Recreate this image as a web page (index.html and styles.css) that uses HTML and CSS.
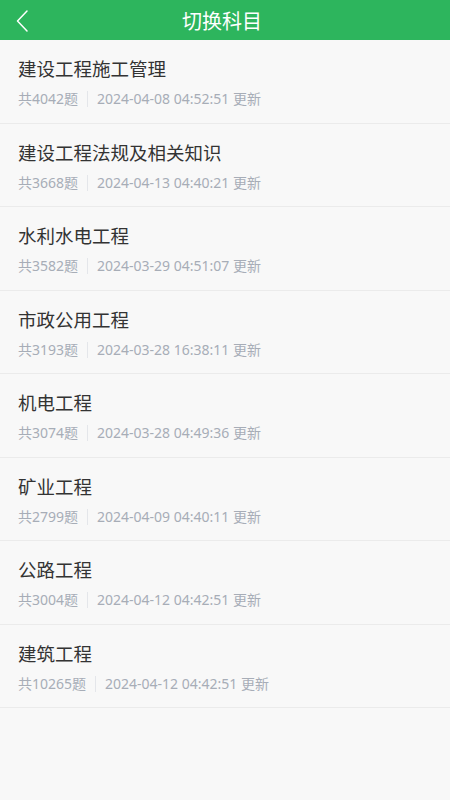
FILE: index.html
```html
<!DOCTYPE html>
<html lang="zh-CN">
<head>
  <meta charset="UTF-8" />
  <meta name="viewport" content="width=device-width, initial-scale=1.0" />
  <title>切换科目</title>
  <link rel="stylesheet" href="styles.css">
</head>
<body>
  <div class="nav-bar">
    <span class="back">
      <svg width="14" height="24" viewBox="0 0 14 24"><path d="M12 2 L2.5 12 L12 22" fill="none" stroke="#fff" stroke-width="1.5" stroke-linecap="round" stroke-linejoin="round"/></svg>
    </span>
    <h1>切换科目</h1>
  </div>

  <ul class="subject-list">
    <li>
      <div class="name">建设工程施工管理</div>
      <div class="meta"><span class="count">共4042题</span><span class="time">2024-04-08 04:52:51 更新</span></div>
    </li>
    <li>
      <div class="name">建设工程法规及相关知识</div>
      <div class="meta"><span class="count">共3668题</span><span class="time">2024-04-13 04:40:21 更新</span></div>
    </li>
    <li>
      <div class="name">水利水电工程</div>
      <div class="meta"><span class="count">共3582题</span><span class="time">2024-03-29 04:51:07 更新</span></div>
    </li>
    <li>
      <div class="name">市政公用工程</div>
      <div class="meta"><span class="count">共3193题</span><span class="time">2024-03-28 16:38:11 更新</span></div>
    </li>
    <li>
      <div class="name">机电工程</div>
      <div class="meta"><span class="count">共3074题</span><span class="time">2024-03-28 04:49:36 更新</span></div>
    </li>
    <li>
      <div class="name">矿业工程</div>
      <div class="meta"><span class="count">共2799题</span><span class="time">2024-04-09 04:40:11 更新</span></div>
    </li>
    <li>
      <div class="name">公路工程</div>
      <div class="meta"><span class="count">共3004题</span><span class="time">2024-04-12 04:42:51 更新</span></div>
    </li>
    <li>
      <div class="name">建筑工程</div>
      <div class="meta"><span class="count">共10265题</span><span class="time">2024-04-12 04:42:51 更新</span></div>
    </li>
  </ul>
</body>
</html>
```

FILE: styles.css
```css
:root {
  --green: #2db55d;
  --bg: #f8f8f8;
  --title: #333333;
  --muted: #a7adb7;
  --line: #ebebeb;
}

body {
  margin: 0;
  padding: 0;
  background-color: var(--bg);
  font-family: "Noto Sans CJK SC", "Noto Sans", sans-serif;
}

.nav-bar {
  height: 40px;
  background-color: var(--green);
  display: flex;
  align-items: center;
  justify-content: center;
  position: relative;
}

.nav-bar h1 {
  margin: 0 6px 0 0;
  font-size: 20px;
  font-weight: 400;
  color: #ffffff;
}

.back {
  position: absolute;
  left: 15px;
  top: 9px;
  display: flex;
}

.subject-list {
  list-style: none;
  margin: 0;
  padding: 0;
}

.subject-list li {
  padding: 16px 18px 13.5px;
  border-bottom: 1px solid var(--line);
}

.name {
  font-size: 18.5px;
  line-height: 24px;
  color: var(--title);
}

.meta {
  margin-top: 9px;
  display: flex;
  align-items: center;
  font-family: "Noto Sans", "Noto Sans CJK SC", sans-serif;
  font-size: 14px;
  line-height: 20px;
  color: var(--muted);
}

.count {
  padding-right: 9px;
  margin-right: 9px;
  border-right: 1px solid #e4e6ea;
  line-height: 16px;
}
```
